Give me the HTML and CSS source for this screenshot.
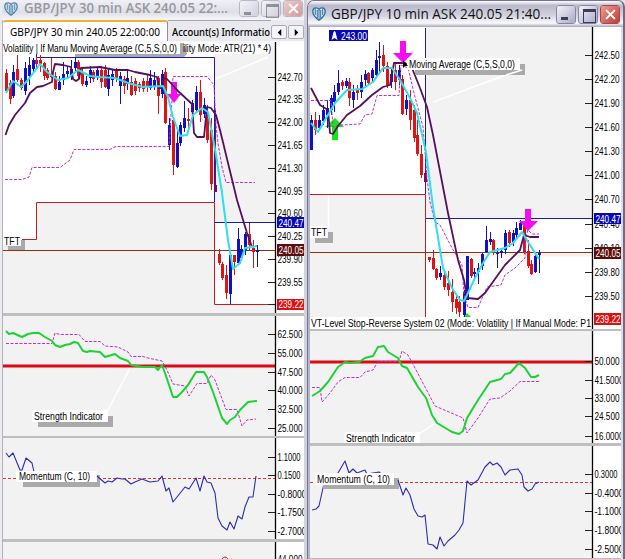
FILE: index.html
```html
<!DOCTYPE html>
<html lang="en">
<head>
    <meta charset="UTF-8">
    <meta name="viewport" content="width=device-width, initial-scale=1.0">
    <title>GBP/JPY</title>
    <link rel="stylesheet" href="styles.css">
</head>
<body>
    <svg class="defs" width="0" height="0">
        <symbol id="logo" viewBox="0 0 14 14">
            <path d="M7 13.200C3 10.500 .8 8 .8 4.500 .8 2 2 .8 4 .8 5.500 .8 6.500 1.500 7 2.500 7.500 1.500 8.500 .8 10 .8c2 0 3.200 1.200 3.200 3.700C13.200 8 11 10.500 7 13.200z" fill="#cfe6f3" stroke="#2a6a9c" stroke-width="1.300"/>
            <path d="M3.300 2v6M5.300 3v8M7 3v9M8.700 3v8M10.700 2v6" stroke="#2a6a9c" stroke-width=".9" fill="none"/>
        </symbol>
    </svg>
    <div class="desktop">
        <div class="window inactive">
            <div class="titlebar">
                <svg class="logo"><use href="#logo"/></svg>
                <svg class="title" width="208" height="18"><text x="1" y="13" textLength="204">GBP/JPY 30 min ASK 240.05 22:...</text></svg>
                <div class="buttons">
                    <span class="btn min"></span>
                    <span class="btn max"></span>
                    <span class="btn close"><svg viewBox="0 0 10 10"><path d="M1 1l8 8M9 1l-8 8"/></svg></span>
                </div>
            </div>
            <div class="tabs">
                <div class="tab active"><svg width="154" height="18"><text x="1" y="12.500" textLength="150">GBP/JPY 30 min 240.05 22:00:00</text></svg></div>
                <div class="tab"><svg width="99" height="18"><text x="0" y="14" textLength="98" class="semi">Account(s) Informatio</text></svg></div>
                <div class="scroll">
                    <span><svg viewBox="0 0 8 8"><path d="M6 0v8L2 4z"/></svg></span>
                    <span><svg viewBox="0 0 8 8"><path d="M2 0v8l4-4z"/></svg></span>
                </div>
            </div>
            <div class="body">
                <svg class="panel" width="301" height="271" viewBox="3 42 301 271" data-axis="275" data-candles="left"
                    data-labels="242.70,77;242.35,99.500;242.00,122;241.65,145;241.30,168;240.95,191;240.60,213;240.25,236.500;239.90,259.500;239.55,282;,304">
                    <path class="white" d="M3 42H215V202H37V239H3zM215 222H275V304H215zM275 42H304V313H275z"/>
                    <path class="cream" d="M3 252H215"/>
                    <path class="leader" d="M187 91L268 57"/>
                    <path class="blue" d="M36.500 54V57.500H214.500V202M215 222.500H275"/>
                    <path class="red" d="M22 239.500H36.500V202.500H214.500V304.500H275"/>
                    <path class="maroon" d="M3 250.500H275"/>
                    <g class="candles"></g>
                    <path class="arrow" d="M171 82h6v12h4l-7 9l-7-9h4z"/>
                    <polyline class="dash" points="5,179.500 22,179.500 29,177 32,167.500 60,167.500 70,160 74,149.500 110,149.500 116,146.500 169,146.500 172,100 173,76.500 207,76.500 214,85 216,125 218,143 222,167 226,182.500 255,182.500"/>
                    <polyline class="purple" points="5.500,135 9,125 15,115 25,103 30,93 37,87 43,86 52,82 53,72 55,64 63,65 71,67 73,79 76,81 79,79 81,68 100,67 115,70 128,70 135,72 150,75 157,77 159,88 161,88 164,78 167,79 177,90 192,104 194,133 197,137 204,137 207,107 211,108 216,115 220,130 237,200 247,233 252,247"/>
                    <polyline class="cyan" points="6,93 13,81 21,87 28,80 40,64 47,72 58,80 68,78 78,70 90,76 100,77 115,78 128,83 143,87 163,86 168,97 173,117 180,136 187,135 193,115 202,108 208,112 212,133 216,155 222,193 228,240 233,269 240,263 245,248 257,246"/>
                    <path class="white" d="M3 43H271V54H3z"/>
                    <path class="shadow" d="M75 54H180V43H187V54L184 57H75z"/>
                    <path class="white" d="M180 43H271V53H187L184 43z"/>
                    <text x="3" y="52" textLength="65">Volatility | If Manu</text>
                    <text x="70" y="52" textLength="107">Moving Average (C,5,S,0,0)</text>
                    <text x="183" y="52" textLength="88">ility Mode: ATR(21) * 4)</text>
                    <path class="shadow" d="M8 246H21V240H25V250H8z"/>
                    <path class="white" d="M3 235H21V246H3z"/>
                    <text x="4" y="244.500" textLength="16">TFT</text>
                    <g class="axis"></g>
                    <g class="tags">
                        <path class="tag-blue" d="M277 217H304V228H277z"/><text x="278.500" y="226.500" textLength="25">240.47</text>
                        <path class="tag-maroon" d="M277 244H304V256H277z"/><text x="278.500" y="254" textLength="25">240.05</text>
                        <path class="tag-red" d="M277 299H304V310H277z"/><text x="278.500" y="308" textLength="25">239.22</text>
                    </g>
                </svg>
                <svg class="panel" width="301" height="120" viewBox="3 316 301 120" data-axis="275"
                    data-labels="62.500,334;55.000,353;47.500,372;40.000,390;32.500,409;25.000,428">
                    <path class="white" d="M275 316H304V436H275z"/>
                    <path class="leader" d="M108 410L130 368"/>
                    <path class="level" d="M3 366H275"/>
                    <polyline class="dash" points="6,343.500 52,343.500 55,333 60,334.500 79,334.500 85,341.500 100,341.500 105,346 118,347 128,352 131,356.500 143,356.500 148,358 162,361 167,370 173,384 185,386 189,396 197,383.500 207,383.500 211,375 215,380 226,409.500 237,409.500 242,426 247,420 256,419"/>
                    <polyline class="green" points="6,331 9,334 13,333 22,337 28,334 33,333 39,333 45,337 52,341 55,345 60,347 65,345 70,344 74,342 78,343 83,351 87,352 90,351 100,352 105,357 115,354 120,358 128,361 131,365 143,367 155,367 158,370 162,365 165,373 173,397 177,397 182,392 188,385 196,372 204,372 207,377 213,392 222,418 227,424 230,420 235,417 240,410 248,402 257,401"/>
                    <path class="shadow" d="M38 422H108V416H113V427H38z"/>
                    <path class="white" d="M32 410H108V422H32z"/>
                    <text x="34" y="420" textLength="69">Strength Indicator</text>
                    <g class="axis"></g>
                </svg>
                <svg class="panel" width="301" height="101" viewBox="3 438 301 101" data-axis="275"
                    data-labels="1.1000,457;0.1500,475.500;-0.8000,494;-1.7500,512;-2.7000,531">
                    <path class="white" d="M275 438H304V539H275z"/>
                    <path class="zero" d="M3 478.500H275"/>
                    <polyline class="momentum" points="6,453 9,457 13,453 20,470 22,470 26,458 32,463 34,472"/>
                    <path class="shadow" d="M23 482H97V475H100V487H23z"/>
                    <path class="white" d="M16 471H97V482H16z"/>
                    <polyline class="momentum" points="97,476 105,483 108,481 112,482 117,478 122,479 125,479 131,484 135,482 142,479 150,482 158,481 162,476 166,491 169,488 173,502 177,497 185,487 189,489 196,478 200,491 204,476 207,482 211,483 215,493 218,518 222,526 227,530 230,522 234,529 238,516 242,519 245,507 249,497 253,497 256,476"/>
                    <text x="19" y="480" textLength="71">Momentum (C, 10)</text>
                    <g class="axis"></g>
                </svg>
                <svg class="panel" width="301" height="17" viewBox="3 542 301 17" data-axis="275" data-labels="44.000,559">
                    <path class="white" d="M275 542H304V559H275z"/>
                    <path class="red" d="M222 559Q225 555 228 559"/>
                    <g class="axis"></g>
                </svg>
            </div>
        </div>

        <div class="window front">
            <div class="titlebar">
                <svg class="logo"><use href="#logo"/></svg>
                <svg class="title" width="224" height="20"><text x="0" y="15" textLength="220">GBP/JPY 10 min ASK 240.05 21:40...</text></svg>
                <div class="buttons">
                    <span class="btn min"></span>
                    <span class="btn max"></span>
                    <span class="btn close"><svg viewBox="0 0 10 10"><path d="M1 1l8 8M9 1l-8 8"/></svg></span>
                </div>
            </div>
            <div class="body">
                <svg class="panel" width="311" height="302" viewBox="310 27 311 302" data-axis="592" data-candles="right"
                    data-labels="242.50,55;242.20,79;241.90,103;241.60,127;241.30,151.500;241.00,175.500;240.70,199;240.40,224;240.10,248;239.80,272;239.50,296.500">
                    <path class="white" d="M310 27H425V194H310zM426 218H592V317H426zM592 27H621V329H592zM310 317H592V329H310z"/>
                    <path class="cream" d="M310 255H592"/>
                    <path class="leader" d="M433 102L519 70M328.500 192V228"/>
                    <path class="blue" d="M425.500 28V194M426 218.500H592"/>
                    <path class="red" d="M310 194.500H425.500V317"/>
                    <path class="maroon" d="M310 252.500H592"/>
                    <path class="up" d="M335 118l9 9h-6v13h-6v-13h-7zM467 313l4 4h-8z"/>
                    <g class="candles"></g>
                    <polyline class="dash" points="311,100.500 331,100.500 333,127 342,125 360,124 365,115 372,114 377,95.500 399,95.500 401,65 408,68 415,97 423,127 427,178 430,202 435,222 440,225 452,248 462,265 464,295 468,307.500 478,307.500 487,287 501,285 505,275 515,268 525,258 526,236 528,230 532,234 539,234"/>
                    <polyline class="purple" points="311,88 320,105 328,110 330,133 333,134 338,126 347,115 360,106 372,95 383,87 390,85 394,63 405,63 412,68 420,88 427,107 433,135 448,213 458,260 464,280 467,298 478,299 485,293 505,265 520,250 524,235 530,237 539,237"/>
                    <polyline class="cyan" points="311,123 318,132 325,120 335,103 347,90 362,89 373,82 383,68 392,68 400,80 410,98 417,113 426,152 433,207 443,268 452,288 460,300 464,301 467,295 475,278 483,263 490,252 505,248 513,243 522,232 528,242 539,259"/>
                    <path class="arrow" d="M400 41h6v12h7l-10 10l-10-10h7zM525 209h6v12h7l-10 10l-9-10h6z"/>
                    <path class="tag-blue" d="M329 30H368V41H329z"/>
                    <path class="white" d="M331.500 40l2-8l1-1l1 1l2 8l-3-2z"/>
                    <text class="inverse" x="341" y="39.500" textLength="26">243.00</text>
                    <path class="shadow" d="M415 70H520V64H525V75H415z"/>
                    <path class="white" d="M407 58H520V70H407z"/>
                    <path class="leader" d="M506 75L522 70"/>
                    <path d="M403 60v8l2-2h3z"/>
                    <text x="409" y="67.500" textLength="106">Moving Average (C,5,S,0,0)</text>
                    <path class="shadow" d="M315 237H328V232H333V243H315z"/>
                    <path class="white" d="M310 226H328V238H310z"/>
                    <text x="311" y="235.500" textLength="16">TFT</text>
                    <text x="311" y="327" textLength="280">VT-Level Stop-Reverse System 02 (Mode: Volatility | If Manual Mode: P1</text>
                    <g class="axis"></g>
                    <g class="tags">
                        <path class="tag-blue" d="M594 213H621V224H594z"/><text x="595.500" y="222.500" textLength="25">240.47</text>
                        <path class="tag-maroon" d="M594 247H621V259H594z"/><text x="595.500" y="257" textLength="25">240.05</text>
                        <path class="tag-red" d="M594 313H621V325H594z"/><text x="595.500" y="323" textLength="25">239.22</text>
                    </g>
                </svg>
                <svg class="panel" width="311" height="112" viewBox="310 331 311 112" data-axis="592"
                    data-labels="50.000,361.500;41.5000,380.500;33.000,398;24.500,416.500;16.0000,436">
                    <path class="white" d="M592 331H621V443H592z"/>
                    <path class="leader" d="M419 434L434 424"/>
                    <path class="level" d="M310 362H592"/>
                    <polyline class="dash" points="312,387.500 320,387.500 322,402 330,393 338,382 345,377.500 360,377.500 365,372 373,370 378,361.500 399,361.500 402,351 408,355 415,368 435,406 463,418 467,433 478,418 490,399 500,398 510,391 520,381.500 539,381.500"/>
                    <polyline class="green" points="312,396 320,391 328,382 338,367 345,362 350,363 359,362 365,358 373,356 378,347 384,346 388,352 398,358 402,366 407,368 418,387 426,398 432,415 437,423 452,432 459,434 463,431 467,418 478,400 490,382 501,379 505,374 510,373 519,363 525,368 531,377 535,377 539,375"/>
                    <path class="white" d="M344 432H420V443H344z"/>
                    <text x="346" y="441.500" textLength="69">Strength Indicator</text>
                    <g class="axis"></g>
                </svg>
                <svg class="panel" width="311" height="112" viewBox="310 446 311 112" data-axis="592"
                    data-labels="0.3000,474;-0.4000,493;-1.1000,511.500;-1.8000,530;-2.5000,549">
                    <path class="white" d="M592 446H621V558H592z"/>
                    <path class="zero" d="M310 482.500H592"/>
                    <polyline class="momentum" points="312,510 316,509 319,506 323,488 325,480 338,473 345,461 349,473 353,469 357,473 365,470 367,474 379,472 385,478"/>
                    <path class="shadow" d="M323 485H394V478H399V489H323z"/>
                    <path class="white" d="M315 473H394V485H315z"/>
                    <polyline class="momentum" points="398,480 403,495 406,488 410,495 414,509 418,516 422,517 425,515 428,544 433,545 437,549 440,537 444,546 448,541 455,535 459,530 463,523 467,481 471,485 478,480 485,467 490,462 493,465 497,463 501,467 505,475 510,470 518,469 522,475 524,487 528,491 532,489 535,484 539,482"/>
                    <text x="317" y="482.500" textLength="73">Momentum (C, 10)</text>
                    <g class="axis"></g>
                </svg>
            </div>
        </div>
    </div>
    <script src="script.js"></script>
</body>
</html>
```
FILE: styles.css
```css
* {
    box-sizing: border-box;
    margin: 0;
    padding: 0;
}
body {
    width: 625px;
    height: 559px;
    overflow: hidden;
    background: #fff;
    font-family: "Liberation Sans", Arial, sans-serif;
}
svg {
    display: block;
    flex: none;
}
.defs {
    position: absolute;
}
.desktop {
    display: grid;
    grid-template-columns: 307px 318px;
    height: 559px;
    overflow: hidden;
    background: #e4e4ec;
}
.window {
    display: flex;
    flex-direction: column;
    min-width: 0;
    height: 559px;
    overflow: hidden;
    background: #bebebe;
}
.inactive {
    border-left: 2px solid #ececf0;
    border-right: 3px solid #d2d2dc;
    box-shadow: inset 1px 0 #b4b4bd;
    padding-left: 1px;
}
.front {
    border: solid #74748e;
    border-width: 1px 2px 0 1px;
    border-right-color: #6c6c86;
    border-radius: 7px 7px 0 0;
    padding: 0 1px 0 2px;
    background: linear-gradient(90deg, #b4b4ca 2px, #bebebe 2px, #bebebe 313px, #dcdce6 313px);
}

/* title bars */
.titlebar {
    display: flex;
    align-items: center;
    flex: none;
}
.inactive .titlebar {
    height: 20px;
    margin-left: -1px;
    padding: 0 1px 3px 2px;
    background: linear-gradient(#f0f0f6, #dedee8 60%, #f6f6fa);
}
.front .titlebar {
    height: 26px;
    margin: 0 -1px 0 -2px;
    padding: 0 3px 0 4px;
    background: linear-gradient(#fff, #b9b9cb 18%, #d2d2df 55%, #fafafc 85%, #a5a5b8);
}
.logo {
    width: 14px;
    height: 14px;
}
.inactive .logo {
    opacity: .8;
}
.title {
    margin-left: 5px;
    font-family: "Open Sans", sans-serif;
    font-size: 15px;
    font-weight: 500;
    fill: #111;
}
.inactive .title {
    font-size: 14px;
    font-weight: 600;
    fill: #98989c;
}
.buttons {
    display: flex;
    gap: 2px;
    margin-left: auto;
}
.btn {
    display: flex;
    width: 20px;
    height: 19px;
    border: 1px solid #fff;
    border-radius: 3px;
    outline: 1px solid #85859d;
    outline-offset: -1px;
    background: linear-gradient(135deg, #f4f4fb, #a9a9c6);
}
.inactive .btn {
    height: 17px;
    outline-color: #b8b8c4;
    background: linear-gradient(135deg, #f4f4f8, #cfcfdb);
}
.min::after {
    content: "";
    width: 7px;
    height: 3px;
    margin: 11px 0 0 4px;
    background: #3d3d55;
}
.max::after {
    content: "";
    width: 11px;
    height: 10px;
    margin: 3px 0 0 4px;
    border: 1px solid #3d3d55;
    border-top-width: 3px;
}
.inactive .btn::after {
    opacity: .5;
}
.front .close {
    background: linear-gradient(135deg, #f09a90, #c03c38);
    outline-color: #a04a50;
}
.inactive .close {
    background: linear-gradient(135deg, #f0cccc, #cf9a9d);
}
.close svg {
    width: 11px;
    height: 11px;
    margin: auto;
    stroke: #fff;
    stroke-width: 1.8;
}

/* tabs */
.tabs {
    display: flex;
    flex: none;
    height: 22px;
    background: #e9e9ee;
    border-bottom: 1px solid #f8f8f8;
    font-family: "Noto Sans", sans-serif;
    font-size: 11px;
}
.tab {
    border-top: 1px solid #a5a5b0;
    padding: 1px 0 0 4px;
}
.tab.active {
    width: 165px;
    padding-left: 6px;
    border-top: 2px solid #f0b030;
    border-right: 1px solid #90909c;
    border-radius: 3px 3px 0 0;
    background: #fcfcfe;
}
.semi {
    font-weight: 500;
}
.scroll {
    display: flex;
    gap: 1px;
    margin-left: auto;
    padding: 5px 0 2px;
}
.scroll span {
    display: flex;
    width: 16px;
    border: 1px solid #aaaab6;
    border-radius: 2px;
    background: #f4f4f8;
}
.scroll svg {
    width: 7px;
    height: 7px;
    margin: auto;
}

/* charts */
.panel {
    background: #f2f2f2;
    font-size: 10px;
}
.inactive .panel + .panel {
    margin-top: 3px;
}
.front .panel + .panel {
    margin-top: 2px;
}
.inactive .panel:nth-child(3) {
    margin-top: 2px;
}
.front .panel:nth-child(3) {
    margin-top: 3px;
}
.panel path,
.panel polyline {
    stroke-linejoin: round;
}
.white {
    fill: #fff;
}
.shadow {
    fill: #aaa;
}
.cream {
    stroke: #f7f3e2;
    stroke-width: 3;
}
.leader {
    fill: none;
    stroke: #fff;
    stroke-width: 1.5;
}
.blue {
    fill: none;
    stroke: #1c1caa;
}
.red {
    fill: none;
    stroke: #c02020;
}
.maroon {
    stroke: #8a3028;
}
.level {
    stroke: #dc0a14;
    stroke-width: 3;
}
.zero {
    stroke: #d23c32;
    stroke-dasharray: 3 2;
}
.purple,
.cyan,
.green,
.dash,
.momentum {
    fill: none;
}
.purple {
    stroke: #56105e;
    stroke-width: 1.8;
}
.cyan {
    stroke: #2ce0ee;
    stroke-width: 2;
}
.green {
    stroke: #1ed234;
    stroke-width: 2;
}
.dash {
    stroke: #c62ccc;
    stroke-dasharray: 3 1.5;
}
.momentum {
    stroke: #2c2cb4;
    stroke-width: 1.1;
}
.arrow {
    fill: #f80cf0;
}
.up {
    fill: #10e818;
}
.tag-blue {
    fill: #0808b4;
}
.tag-maroon {
    fill: #5c0c0c;
}
.tag-red {
    fill: #dc1010;
}
.tags text,
.inverse {
    fill: #fff;
}
.candles {
    shape-rendering: crispEdges;
}
.r {
    fill: #de1414;
}
.b {
    fill: #1010c8;
}
.p {
    fill: #780c60;
}
```
FILE: script.js
```js
// x, high, low, body top, body bottom, colour
var candles = {
    left: "6 69 93 73 91 r,10 80 104 83 99 r,13 65 98 72 96 b,17 55 82 69 80 r,21 78 90 80 88 r,25 62 95 68 91 b,29 57 85 65 76 b,33 58 72 60 69 b,36 58 68 60 64 r,40 55 72 60 64 r,44 62 80 63 76 r,47 68 80 70 78 r,51 58 78 74 77 r,55 72 90 76 89 r,59 76 90 82 90 b,63 62 85 74 80 b,67 66 78 71 74 b,71 60 80 69 76 b,75 57 72 62 68 b,78 60 80 62 76 r,82 68 86 72 84 r,86 76 87 81 85 b,90 66 83 70 78 b,93 70 82 72 79 r,97 67 80 70 77 b,101 66 88 70 82 r,105 65 88 70 87 r,108 68 96 75 89 b,112 70 86 74 80 b,116 68 82 71 78 r,120 72 104 76 86 b,124 76 94 79 86 r,127 70 90 78 84 b,131 76 96 82 95 r,135 78 95 81 91 r,139 82 92 84 88 r,143 78 92 81 89 r,147 74 92 81 86 r,150 70 90 78 88 b,154 72 90 80 86 b,158 76 114 78 96 r,162 70 98 74 94 b,165 68 124 72 123 r,169 118 150 125 145 b,173 118 175 120 165 r,177 130 168 143 167 b,180 122 146 125 143 b,184 101 132 118 128 b,188 108 130 119 121 r,192 100 120 103 112 b,196 86 112 92 110 b,200 80 122 92 115 r,204 98 118 105 114 b,207 105 143 112 140 r,211 118 190 130 184 r,215 110 192 185 192 p,219 249 265 254 263 r,222 262 280 264 278 r,226 265 299 275 293 r,230 252 304 255 294 b,234 255 275 255 262 r,238 228 263 239 263 b,241 245 260 249 258 b,245 232 255 234 250 b,249 223 250 234 245 r,253 240 268 248 252 r,257 245 267 250 252 b",
    right: "311 115 150 120 150 b,315 112 135 120 130 r,319 115 130 120 128 b,323 105 125 110 121 b,327 100 128 108 115 b,331 95 115 98 110 b,334 85 112 92 102 b,338 70 95 83 92 b,342 80 90 82 86 r,346 78 88 81 86 b,349 78 106 82 98 r,353 85 108 92 100 b,357 85 100 89 93 r,361 75 98 82 92 b,365 70 86 74 80 b,368 72 84 73 83 r,372 68 82 70 78 b,376 50 78 60 75 b,379 42 72 56 58 b,383 45 72 55 66 r,387 62 88 66 85 r,391 68 88 74 82 b,395 63 90 70 82 r,399 65 85 70 80 b,402 75 115 79 114 r,406 95 115 100 109 b,410 90 130 100 120 r,414 105 142 110 138 r,417 120 156 135 154 r,421 145 178 154 175 r,425 168 188 173 182 p,429 257 262 257 260 r,433 250 270 258 269 r,436 268 280 269 278 r,440 266 280 273 277 b,444 271 290 275 287 r,448 271 296 283 290 r,452 279 312 292 302 r,456 295 314 299 308 r,459 296 317 302 312 r,464 290 317 292 315 b,467 256 300 256 300 b,471 258 278 259 276 r,474 268 278 272 274 b,478 263 284 268 272 b,482 253 270 254 266 b,486 226 253 240 252 b,490 232 245 239 242 b,493 239 255 240 252 r,497 248 268 253 254 b,501 248 258 251 253 b,505 230 254 233 250 b,509 230 247 232 243 r,513 230 246 233 242 b,516 222 238 228 235 b,520 220 230 223 230 b,524 222 254 225 252 r,528 240 268 251 266 r,531 260 275 264 274 r,535 255 273 256 272 b,539 250 273 253 255 b"
};
var panels = document.getElementsByClassName("panel");

for (var i = 0; i < panels.length; i++) {
    drawAxis(panels[i]);
    if (panels[i].dataset.candles) {
        drawCandles(panels[i]);
    }
}

// narrow the glyphs together with the spacing
var texts = document.getElementsByTagName("text");
for (var j = 0; j < texts.length; j++) {
    texts[j].setAttribute("lengthAdjust", "spacingAndGlyphs");
}

function drawAxis(panel) {
    var x = +panel.dataset.axis;
    var box = panel.viewBox.baseVal;
    var html = '<path d="M' + (x + 0.5) + ' ' + box.y + 'v' + box.height + '" stroke="#000" stroke-width="1.3"/>';
    panel.dataset.labels.split(";").forEach(function (item) {
        var p = item.split(",");
        var y = Math.floor(+p[1]) + 0.5;
        html += '<path d="M' + (x - 7) + ' ' + y + 'h7" stroke="#222"/>';
        if (p[0]) {
            // four decimals run past the edge of the panel
            var width = p[0].length > 6 ? 29 : (p[0].charAt(1) == "." ? 23 : 25);
            html += '<text x="' + (x + 2.5) + '" y="' + (+p[1] + 3.7) + '" textLength="' + width + '">' + p[0] + '</text>';
        }
    });
    panel.querySelector(".axis").innerHTML = html;
}

function drawCandles(panel) {
    var html = "";
    candles[panel.dataset.candles].split(",").forEach(function (item) {
        var c = item.split(" ");
        html += '<rect class="' + c[5] + '" x="' + c[0] + '" y="' + c[1] + '" width="1" height="' + (c[2] - c[1]) + '"/>';
        html += '<rect class="' + c[5] + '" x="' + (c[0] - 1) + '" y="' + c[3] + '" width="3" height="' + (c[4] - c[3]) + '"/>';
    });
    panel.querySelector(".candles").innerHTML = html;
}
```
